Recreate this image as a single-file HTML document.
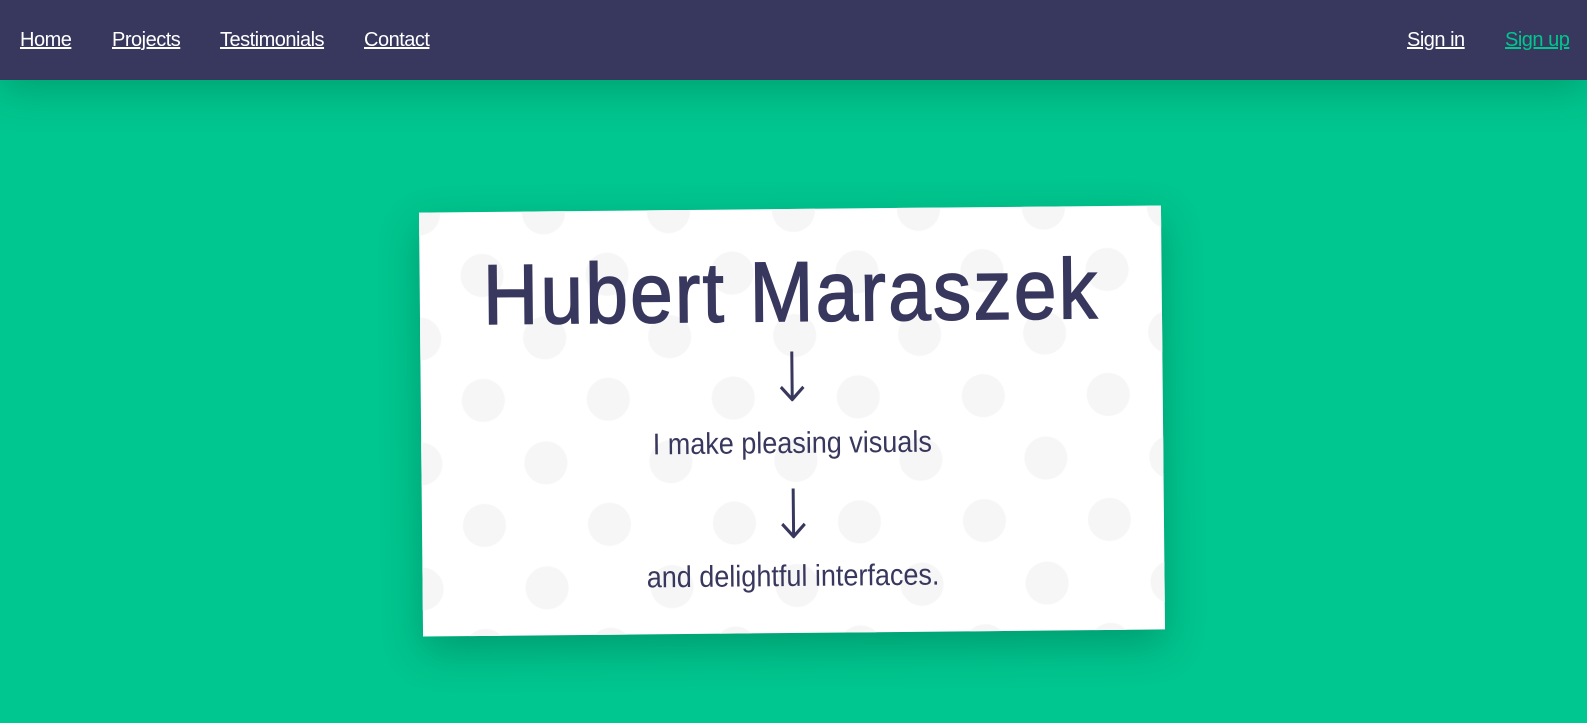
<!DOCTYPE html>
<html><head><meta charset="utf-8"><style>
*{margin:0;padding:0;box-sizing:border-box}
html,body{width:1587px;height:723px;overflow:hidden;background:#00c68f;font-family:"Liberation Sans",sans-serif}
nav{position:absolute;left:0;top:0;width:1587px;height:80px;background:#38375e;box-shadow:0 8px 40px rgba(0,80,50,.35);z-index:2}
nav a{position:absolute;top:29px;color:#fff;font-size:20px;text-decoration:underline;letter-spacing:-0.5px}
.card{position:absolute;left:421px;top:209px;width:742px;height:424px;background-color:#fff;
background-image:radial-gradient(circle,#f6f6f6 21px,transparent 22px),radial-gradient(circle,#f6f6f6 21px,transparent 22px);
background-size:125px 125px;background-position:0px 126px,62px 64px;
transform:rotate(-0.55deg);box-shadow:0 15px 40px rgba(0,60,40,.3);text-align:center;color:#38375e}
.t{position:absolute;left:0;width:100%;white-space:nowrap}
.t span{display:inline-block;transform:scaleX(.9)}
</style></head><body>
<nav>
<a style="left:20px">Home</a>
<a style="left:112px">Projects</a>
<a style="left:220px">Testimonials</a>
<a style="left:364px">Contact</a>
<a style="left:1407px">Sign in</a>
<a style="left:1505px;color:#00c68f">Sign up</a>
</nav>
<div class="card">
<div class="t" style="top:35px;font-size:85px;letter-spacing:2.5px;-webkit-text-stroke:1.5px #38375e"><span>Hubert Maraszek</span></div>
<div class="t" style="top:130px;font-size:68px;font-family:'DejaVu Sans',sans-serif;font-weight:200"><span>↓</span></div>
<div class="t" style="top:218px;font-size:30px"><span>I make pleasing visuals</span></div>
<div class="t" style="top:267px;font-size:68px;font-family:'DejaVu Sans',sans-serif;font-weight:200"><span>↓</span></div>
<div class="t" style="top:351px;font-size:30px"><span>and delightful interfaces.</span></div>
</div>
</body></html>
